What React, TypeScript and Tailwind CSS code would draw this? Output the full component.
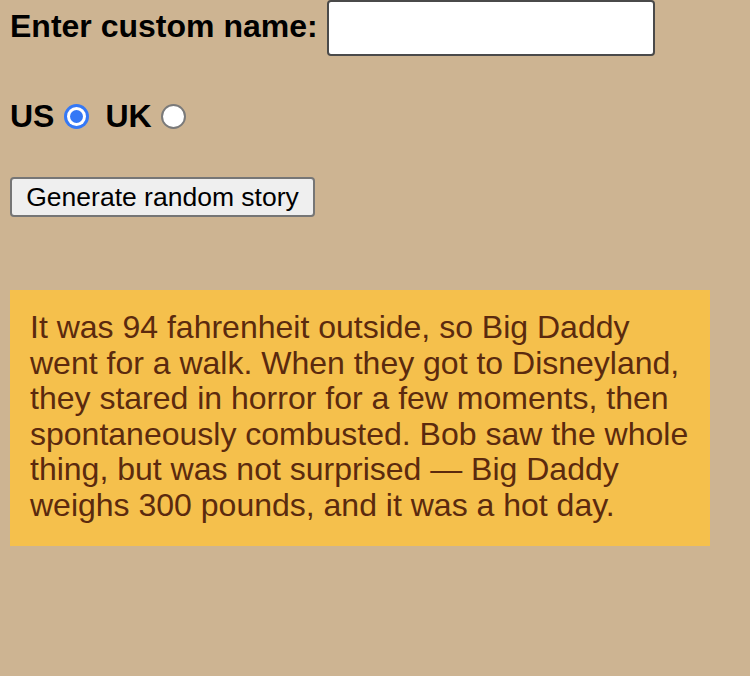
import { useState } from "react";

const story =
  "It was 94 fahrenheit outside, so Big Daddy went for a walk. When they got to Disneyland, they stared in horror for a few moments, then spontaneously combusted. Bob saw the whole thing, but was not surprised \u2014 Big Daddy weighs 300 pounds, and it was a hot day.";

function Radio({ checked, onClick }: { checked: boolean; onClick: () => void }) {
  return (
    <button
      type="button"
      onClick={onClick}
      className={
        checked
          ? "w-[25px] h-[25px] rounded-full bg-[#3478f6] flex items-center justify-center"
          : "w-[25px] h-[25px] rounded-full bg-white border-2 border-[#7a7a7a]"
      }
    >
      {checked && (
        <span className="w-[19px] h-[19px] rounded-full bg-white flex items-center justify-center">
          <span className="w-[13px] h-[13px] rounded-full bg-[#3478f6]" />
        </span>
      )}
    </button>
  );
}

export default function App() {
  const [country, setCountry] = useState("us");

  return (
    <div className="min-h-screen bg-[#cdb492] px-[10px] font-['Liberation_Sans',Arial,sans-serif] text-black">
      <div className="flex items-center gap-[9px] h-[56px]">
        <label htmlFor="customname" className="text-[32px] font-bold leading-none pb-[4px]">
          Enter custom name:
        </label>
        <input
          id="customname"
          type="text"
          className="w-[328px] h-[56px] bg-white border-2 border-[#4a4a4a] rounded-[4px] outline-none px-2 text-[26px]"
        />
      </div>

      <div className="flex items-center h-[32px] mt-[44px] text-[32px] font-bold leading-none">
        <span>US</span>
        <span className="ml-[10px]">
          <Radio checked={country === "us"} onClick={() => setCountry("us")} />
        </span>
        <span className="ml-[16px]">UK</span>
        <span className="ml-[9px]">
          <Radio checked={country === "uk"} onClick={() => setCountry("uk")} />
        </span>
      </div>

      <div className="mt-[45px]">
        <button
          type="button"
          className="h-[40px] w-[305px] bg-[#efefef] border-2 border-[#767676] rounded-[4px] text-[26.5px] leading-none text-black"
        >
          Generate random story
        </button>
      </div>

      <div className="mt-[73px] w-[700px] bg-[#f5c04c] pl-[20px] pr-[16px] pt-[20px] pb-[22px]">
        <p className="text-[32px] leading-[35.6px] text-[#5b2a0e]">{story}</p>
      </div>
    </div>
  );
}
